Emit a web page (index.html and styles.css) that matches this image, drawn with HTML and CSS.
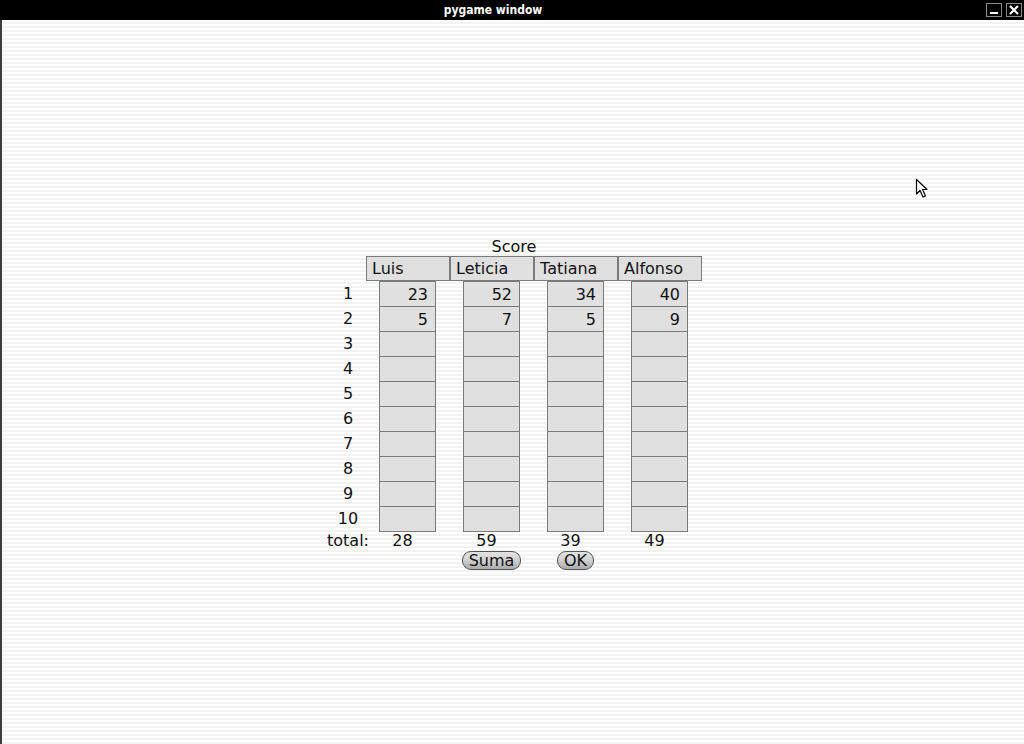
FILE: index.html
```html
<!DOCTYPE html>
<html lang="es">
<head>
  <meta charset="UTF-8" />
  <title>pygame window</title>
  <link rel="stylesheet" href="styles.css">
</head>
<body>
  <!-- barra de titulo -->
  <div class="titlebar">
    <span class="title">pygame window</span>
    <div class="win-buttons">
      <span class="win-btn">
        <svg width="16" height="14" viewBox="0 0 16 14"><rect x="0.5" y="0.5" width="15" height="13" fill="#000" stroke="#8a8a8a"/><rect x="4" y="9" width="8" height="2" fill="#fff"/></svg>
      </span>
      <span class="win-btn">
        <svg width="16" height="14" viewBox="0 0 16 14"><rect x="0.5" y="0.5" width="15" height="13" fill="#000" stroke="#8a8a8a"/><path d="M4 3 L12 11 M12 3 L4 11" stroke="#fff" stroke-width="2.2"/></svg>
      </span>
    </div>
  </div>

  <div class="screen">
    <div class="board">
      <div class="caption">Score</div>

      <div class="head-row">
        <div class="head">Luis</div>
        <div class="head">Leticia</div>
        <div class="head">Tatiana</div>
        <div class="head">Alfonso</div>
      </div>

      <div id="rows"></div>

      <div class="row totals">
        <div class="label">total:</div>
        <div class="total">28</div>
        <div class="total">59</div>
        <div class="total">39</div>
        <div class="total">49</div>
      </div>

      <div class="row actions">
        <div class="label"></div>
        <div class="slot"></div>
        <div class="slot"><button class="pill">Suma</button></div>
        <div class="slot"><button class="pill">OK</button></div>
        <div class="slot"></div>
      </div>
    </div>

    <svg class="cursor" width="14" height="21" viewBox="0 0 14 21">
      <path d="M1.5 1.5 L1.5 16 L5 12.5 L8 19 L10.5 18 L7.5 11.5 L12 11.5 Z" fill="#fff" stroke="#000" stroke-width="1.2" stroke-linejoin="round"/>
    </svg>
  </div>

  <script>
    // puntajes por ronda: Luis, Leticia, Tatiana, Alfonso
    const scores = [
      [23, 52, 34, 40],
      [5, 7, 5, 9]
    ];

    const rows = document.getElementById("rows");

    for (let i = 0; i < 10; i++) {
      const row = document.createElement("div");
      row.classList.add("row", "score-row");
      if (i === 9) row.classList.add("last");

      const label = document.createElement("div");
      label.classList.add("label");
      label.textContent = i + 1;
      row.appendChild(label);

      for (let p = 0; p < 4; p++) {
        const cell = document.createElement("div");
        cell.classList.add("cell");
        cell.textContent = scores[i] ? scores[i][p] : "";
        row.appendChild(cell);
      }
      rows.appendChild(row);
    }
  </script>
</body>
</html>
```

FILE: styles.css
```css
    body {
      margin: 0;
      padding: 0;
      font-family: "DejaVu Sans", sans-serif;
      color: #111;
      background: #fff;
      overflow: hidden;
    }

    .titlebar {
      height: 20px;
      background-color: #000;
      display: flex;
      align-items: center;
    }

    .title {
      flex: 1;
      text-align: center;
      color: #fff;
      font-family: "DejaVu Sans Condensed", "DejaVu Sans", sans-serif;
      font-weight: bold;
      font-size: 12px;
      padding-left: 2px;
    }

    .win-buttons {
      display: flex;
      gap: 4px;
      padding-right: 2px;
      padding-left: 2px;
    }

    .win-btn svg {
      display: block;
    }

    .screen {
      position: relative;
      height: 724px;
      border-left: 2px solid #3c3c3c;
      box-sizing: border-box;
      background: repeating-linear-gradient(to bottom, #fff 0, #fff 2px, #f3f3f3 2px, #f3f3f3 4px);
      padding-top: 218px;
    }

    .board {
      width: 380px;
      margin: 0 auto;
      font-size: 16px;
    }

    .caption {
      height: 18px;
      line-height: 18px;
      text-align: center;
      padding-left: 2px;
      width: 378px;
    }

    .head-row {
      display: flex;
      padding-left: 43px;
    }

    .head {
      width: 84px;
      height: 25px;
      line-height: 23px;
      box-sizing: border-box;
      border: 1px solid #7a7a7a;
      background-color: #e0e0e0;
      padding-left: 5px;
    }

    .row {
      display: flex;
      gap: 27px;
    }

    .label {
      width: 48px;
      margin-right: -19px;
      padding-left: 2px;
      box-sizing: border-box;
      text-align: center;
      line-height: 25px;
    }

    .cell {
      width: 57px;
      height: 25px;
      line-height: 25px;
      box-sizing: border-box;
      border: 1px solid #7a7a7a;
      border-bottom: none;
      background-color: #e0e0e0;
      text-align: right;
      padding-right: 7px;
    }

    .score-row.last .cell {
      height: 26px;
      border-bottom: 1px solid #7a7a7a;
    }

    .totals .label,
    .total {
      line-height: 18px;
    }

    .total {
      width: 57px;
      text-align: center;
      padding-right: 10px;
      box-sizing: border-box;
    }

    .actions {
      margin-top: 1px;
    }

    .slot {
      width: 57px;
      display: flex;
      justify-content: center;
    }

    .pill {
      height: 19px;
      padding: 0 6px;
      font-family: "DejaVu Sans", sans-serif;
      font-size: 16px;
      line-height: 15px;
      color: #111;
      border: 1px solid #555;
      border-radius: 9px;
      background: linear-gradient(to bottom, #e4e4e4 0%, #cfcfcf 50%, #a9a9a9 100%);
      flex-shrink: 0;
    }

    .cursor {
      position: absolute;
      left: 913px;
      top: 158px;
    }
```
